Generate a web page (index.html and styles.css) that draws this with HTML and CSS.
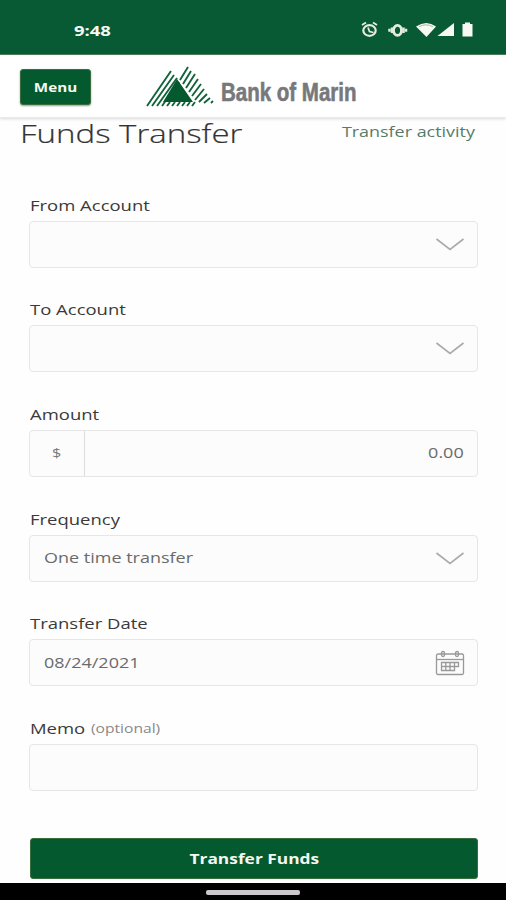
FILE: index.html
```html
<!DOCTYPE html>
<html lang="en">
<head>
<meta charset="utf-8">
<title>Funds Transfer</title>
<link rel="stylesheet" href="styles.css">
</head>
<body>
<div class="screen">
  <div class="status">
    <span class="time">9:48</span>
    <svg class="status-icons" width="114" height="20" viewBox="0 0 114 20">
      <g fill="none" stroke="#e4ecdc" stroke-width="2.200">
        <ellipse cx="9.500" cy="10.500" rx="6.200" ry="5.300"/>
        <path d="M2 5l4-2.500M17 5l-4-2.500M8 7.500l1.500 4 4 1" stroke-width="1.800"/>
        <ellipse cx="37.500" cy="10.300" rx="4" ry="5" stroke-width="2.800"/>
        <path d="M32 7.500v5.500M43.500 7.500v5.500" stroke-width="2.500"/>
        <path d="M29.500 8.800v3M46 8.800v3" stroke-width="2.500"/>
      </g>
      <path d="M56 6.500Q66.500-.5 76 6.500L66.500 17z" fill="#f7faf3"/>
      <path d="M59 6.800q7-4 14 0" fill="none" stroke="#9db8a0" stroke-width="1"/>
      <path d="M94 3v13H77.500z" fill="#f7faf3"/>
      <path d="M102.500 4h2.500V2.500h5V4h2.500v12.500h-10z" fill="#f7faf3"/>
    </svg>
  </div>
  <header class="header">
    <button class="menu"><span>Menu</span></button>
    <svg class="mountain" width="70" height="42" viewBox="0 0 70 42">
      <g stroke="#12633a" stroke-width="1.900" fill="none">
        <path d="M2 40L26 5M7 40L29 9M12 40L32 12M17 40L34 16"/>
        <path d="M35 14L43 1M38 18L46 5M41 22L50 8M44 26L53 13M47 30L56 18M50 34L59 23M54 36L62 28M59 37L65 32M66 37l2-2M22 40l3-4M27 40l3-4M32 40l3-4M37 40l3-4M42 40l3-4M47 40l3-4"/>
      </g>
      <path d="M18 36L32 13L48 36z" fill="#05592f"/>
    </svg>
    <span class="brand"><span>Bank of Marin</span></span>
  </header>
  <main class="content">
    <div class="heading">
      <h1>Funds Transfer</h1>
      <a class="activity">Transfer activity</a>
    </div>
    <form class="form">
      <div class="field">
        <label><span>From Account</span></label>
        <div class="box end"><svg class="chevron" width="30" height="15" viewBox="0 0 30 15"><path d="M1.500 2L15 12.500L28.500 2"/></svg></div>
      </div>
      <div class="field">
        <label><span>To Account</span></label>
        <div class="box end"><svg class="chevron" width="30" height="15" viewBox="0 0 30 15"><path d="M1.500 2L15 12.500L28.500 2"/></svg></div>
      </div>
      <div class="field">
        <label><span>Amount</span></label>
        <div class="box"><span class="currency"><span>$</span></span><span class="value amount">0.00</span></div>
      </div>
      <div class="field">
        <label><span>Frequency</span></label>
        <div class="box"><span class="value">One time transfer</span><svg class="chevron" width="30" height="15" viewBox="0 0 30 15"><path d="M1.500 2L15 12.500L28.500 2"/></svg></div>
      </div>
      <div class="field">
        <label><span>Transfer Date</span></label>
        <div class="box"><span class="value">08/24/2021</span>
          <svg class="calendar" width="30" height="26" viewBox="0 0 30 26">
            <rect x="1.500" y="4" width="27" height="20.500" rx="1.500"/>
            <path d="M1.500 9.500h27"/>
            <rect x="6.500" y="1.500" width="3" height="5" rx="1.500"/>
            <rect x="20.500" y="1.500" width="3" height="5" rx="1.500"/>
            <path d="M6.500 12.500h17v4h-4v4h-13zM6.500 16.500h13M10.800 12.500v8M15 12.500v8M19.500 12.500v4"/>
          </svg>
        </div>
      </div>
      <div class="field">
        <label><span>Memo</span><span class="optional">(optional)</span></label>
        <div class="box"></div>
      </div>
      <button class="submit"><span>Transfer Funds</span></button>
    </form>
  </main>
  <div class="navbar"><div class="handle"></div></div>
</div>
</body>
</html>
```

FILE: styles.css
```css
* { box-sizing: border-box; }
body { margin: 0; background: #fefefe; font-family: "Open Sans", sans-serif; color: #444; }
.screen { width: 506px; height: 900px; display: flex; flex-direction: column; overflow: hidden; }
button { border: 0; padding: 0; font-family: inherit; color: #f4f8f2; background: #05592f; }
span, h1, .activity { white-space: nowrap; }
.status { height: 55px; flex: none; background: #075a34; display: flex; align-items: center; justify-content: space-between; padding: 5px 32px 0 74px; border-bottom: 1px solid #4b8058; }
.time { font-size: 15px; font-weight: 700; color: #f7faf3; transform: scaleX(1.23); transform-origin: left; }
.header { height: 63px; flex: none; background: #fff; display: flex; align-items: flex-start; padding: 14px 0 0 20px; border-bottom: 1px solid #eaeaea; box-shadow: 0 1px 3px rgba(0, 0, 0, .15); position: relative; z-index: 1; }
.menu { width: 71px; height: 36px; border: 1px solid #386d3e; border-radius: 3px; box-shadow: 0 1px 2px rgba(0, 0, 0, .4); font-size: 13px; font-weight: 700; line-height: 32px; }
.menu span { display: inline-block; transform: scaleX(1.17); }
.mountain { margin: -3px 0 0 54px; }
.brand { margin: 7px 0 0 6px; font-family: "Liberation Sans", sans-serif; font-weight: 700; font-size: 25px; line-height: 32px; color: #77787b; -webkit-text-stroke: .6px #77787b; }
.brand span { display: inline-block; transform: scaleX(.82); transform-origin: left; }
.content { flex: 1; min-height: 0; background: #fefefe; }
.heading { height: 76.5px; display: flex; justify-content: space-between; padding: 0 31px 0 20px; }
h1 { margin: -3px 0 0; font-size: 26.5px; font-weight: 300; line-height: 36px; color: #333; transform: scaleX(1.245); transform-origin: left; height: 36px; -webkit-text-stroke: .2px #333; }
.activity { font-size: 14px; line-height: 20px; margin-top: 4px; height: 20px; color: #587b68; transform: scaleX(1.28); transform-origin: right; }
.form { padding: 0 28px 0 29px; }
.field { height: 104.7px; }
label { display: flex; height: 20px; padding-left: 1px; margin-bottom: 6px; font-size: 14px; font-weight: 500; line-height: 21px; color: #3a3a3a; }
label span { display: block; transform: scaleX(1.32); transform-origin: left; }
label .optional { font-size: 12px; font-weight: 400; line-height: 22px; color: #888; margin-left: 19px; transform: scaleX(1.3); }
.box { height: 47px; border: 1.5px solid #e6e6e6; border-radius: 4px; background: #fcfcfc; display: flex; align-items: center; justify-content: space-between; padding: 0 12px 0 0; }
.box.end { justify-content: flex-end; }
.value { margin: -1px 0 0 13.5px; font-size: 14px; color: #6a6a6a; transform: scaleX(1.285); transform-origin: left; }
.value.amount { margin-right: 1px; transform-origin: right; }
.currency { width: 55px; height: 100%; border-right: 1px solid #ddd; text-align: center; font-size: 13px; line-height: 44px; color: #777; }
.currency span { display: inline-block; transform: scaleX(1.25); }
.chevron { fill: none; stroke: #aaa; stroke-width: 1.6; }
.calendar { fill: none; stroke: #999; stroke-width: 1.3; }
.submit { display: block; width: 448px; height: 41px; margin: 15.5px 0 0 1px; border-radius: 3px; border: 1px solid #386d3e; font-size: 14px; font-weight: 700; line-height: 38px; }
.submit span { display: inline-block; transform: scaleX(1.24); }
.navbar { height: 17px; flex: none; background: #000; display: flex; justify-content: center; padding-top: 7px; }
.handle { width: 94px; height: 5px; border-radius: 2px; background: #ccc8cc; }
```
